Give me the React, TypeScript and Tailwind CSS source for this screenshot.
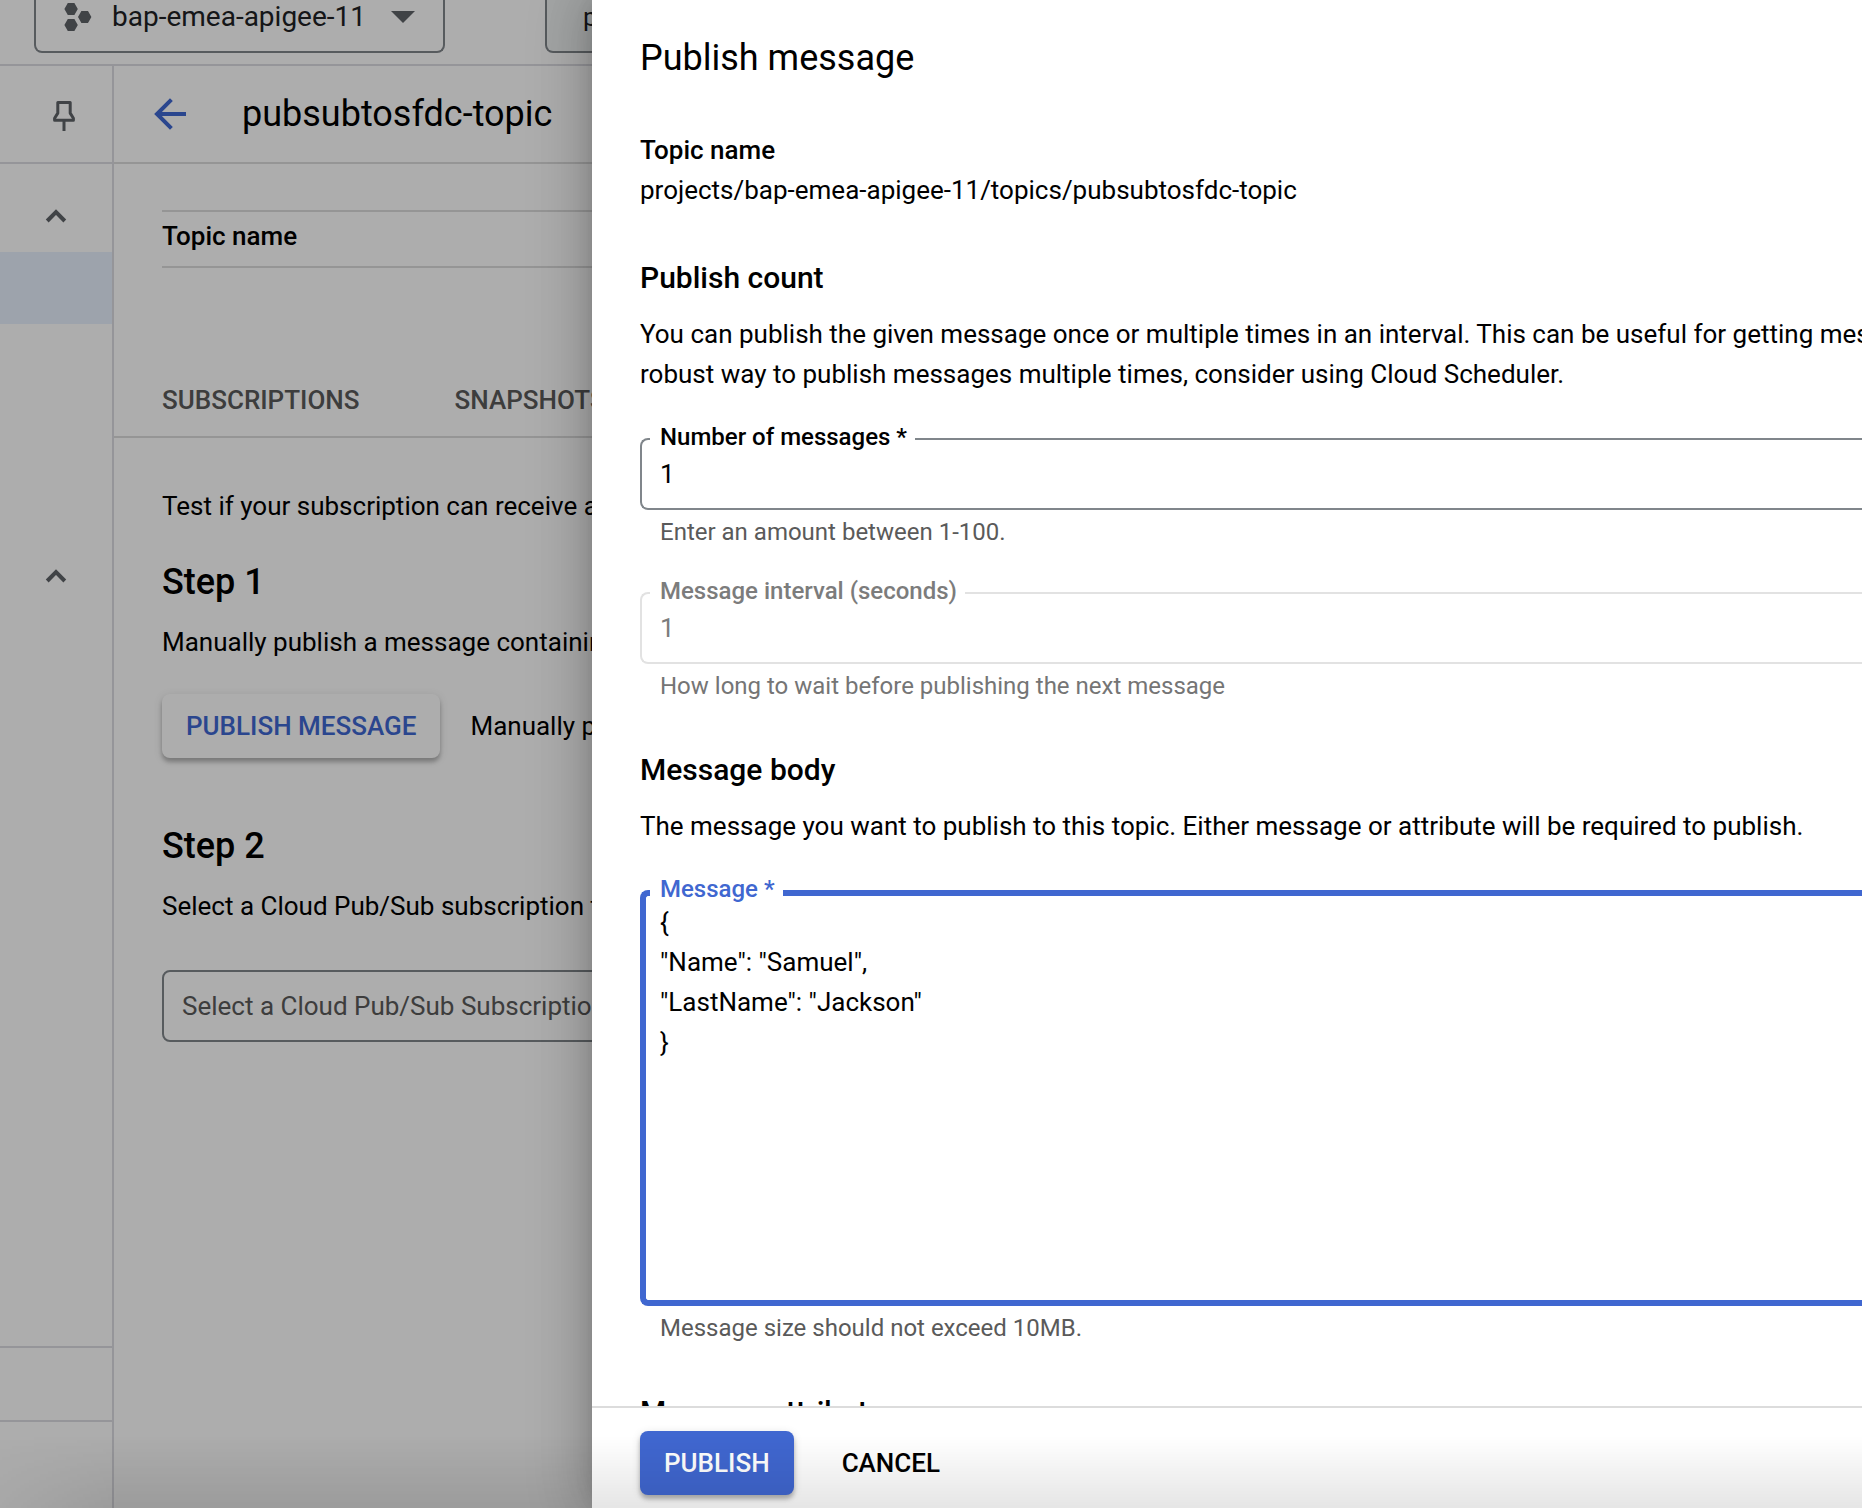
import React from "react";

function Chevron() {
  return (
    <svg width="22" height="14" viewBox="0 0 22 14" fill="none" stroke="#5f6368" strokeWidth="4" aria-hidden="true">
      <path d="M2.2 12 11 3.2l8.8 8.8" />
    </svg>
  );
}

function PinIcon() {
  return (
    <svg width="24" height="32" viewBox="0 0 24 32" fill="none" stroke="#5f6368" strokeWidth="3" aria-hidden="true">
      <path d="M5.8 2.5h12.4v10.6l3.2 5.2v2H2.6v-2l3.2-5.2z" strokeLinejoin="round" />
      <path d="M12 20.5V31" />
    </svg>
  );
}

function BackIcon() {
  return (
    <svg width="32" height="32" viewBox="0 0 32 32" fill="none" stroke="#3f67d2" strokeWidth="4" aria-hidden="true">
      <path d="M17.4 1.6 3 16l14.4 14.4M3 16h29" />
    </svg>
  );
}

function ProjectIcon() {
  return (
    <svg width="28" height="30" viewBox="0 0 28 30" fill="#5f6368" aria-hidden="true">
      <path d="M3.8 1h6.6l3.4 6-3.4 6H3.8L.4 7zM3.8 17h6.6l3.4 6-3.4 6H3.8L.4 23zM17.4 9H24l3.4 6-3.4 6h-6.6L14 15z" />
    </svg>
  );
}

type FieldProps = {
  id: string;
  label: string;
  hint: string;
  labelClass: string;
  hintClass: string;
  children: React.ReactNode;
};

function Field({ id, label, hint, labelClass, hintClass, children }: FieldProps) {
  return (
    <div className="mt-11">
      <div className="relative">
        {children}
        <label
          htmlFor={id}
          className={`absolute left-2.5 -top-[17px] bg-white pl-2.5 pr-2 text-[24px] leading-8 font-medium ${labelClass}`}
        >
          {label}
        </label>
      </div>
      <p id={`${id}-hint`} className={`mt-1.5 pl-5 text-[24px] leading-8 ${hintClass}`}>
        {hint}
      </p>
    </div>
  );
}

const message = `{
"Name": "Samuel",
"LastName": "Jackson"
}`;

function Sidebar() {
  return (
    <nav className="flex w-[114px] shrink-0 flex-col border-r-2 border-[#dcdce2]">
      <div className="flex h-[98px] items-center justify-center border-b-2 border-[#dcdce2] pt-1 pl-4">
        <button type="button" aria-label="Pin menu">
          <PinIcon />
        </button>
      </div>
      <button type="button" aria-label="Collapse section" className="flex h-[88px] items-center justify-center pt-4">
        <Chevron />
      </button>
      <a href="#topics" aria-label="Topics" className="block h-[72px] bg-[#e8f0fe]" />
      <button type="button" aria-label="Collapse section" className="mt-52 flex h-[88px] items-center justify-center">
        <Chevron />
      </button>
      <div className="mt-auto h-[74px] border-t-2 border-[#dcdce2]" />
      <div className="h-[88px] border-t-2 border-[#dcdce2]" />
    </nav>
  );
}

function TopicPage() {
  return (
    <main className="min-w-0 flex-1">
      <div className="flex h-[98px] items-center gap-14 border-b-2 border-[#dcdcdc] pl-10">
        <a href="#back" aria-label="Back">
          <BackIcon />
        </a>
        <h1 className="text-[36px] leading-[48px]">pubsubtosfdc-topic</h1>
      </div>
      <div className="pt-[46px] pl-12">
        <table className="w-full">
          <thead>
            <tr className="border-y-2 border-[#dcdcdc]">
              <th scope="col" className="h-14 p-0 pb-1.5 text-left text-[26px] leading-10 font-medium">
                Topic name
              </th>
            </tr>
          </thead>
        </table>
      </div>
      <div className="mt-28 flex gap-[95px] border-b-2 border-[#dcdcdc] pb-4 pl-12 text-[26px] leading-10 font-medium text-[#5a5a5a]">
        <button type="button">SUBSCRIPTIONS</button>
        <button type="button">SNAPSHOTS</button>
      </div>
      <div className="pt-12 pl-12 text-[26px] leading-10 whitespace-nowrap">
        <p>Test if your subscription can receive a</p>
        <h2 className="mt-8 text-[36px] leading-[48px] font-medium">Step 1</h2>
        <p className="mt-4">Manually publish a message containing</p>
        <div className="mt-8 flex items-center gap-[30px]">
          <button
            type="button"
            className="h-16 rounded-lg bg-white px-6 font-medium text-[#3f67d2] shadow-[0_2px_10px_rgba(0,0,0,0.12),0_4px_4px_rgba(0,0,0,0.24)]"
          >
            PUBLISH MESSAGE
          </button>
          <p>Manually p</p>
        </div>
        <h2 className="mt-16 text-[36px] leading-[48px] font-medium">Step 2</h2>
        <p className="mt-4">Select a Cloud Pub/Sub subscription to</p>
        <select
          aria-label="Select a Cloud Pub/Sub Subscription"
          className="mt-11 block h-[72px] w-full appearance-none rounded-l-lg border-2 border-[#80868b] bg-transparent px-[18px] text-[#5a5a5a]"
        >
          <option>Select a Cloud Pub/Sub Subscription</option>
        </select>
      </div>
    </main>
  );
}

function PublishDrawer() {
  return (
    <aside
      role="dialog"
      aria-label="Publish message"
      className="absolute inset-y-0 right-0 left-[592px] flex flex-col bg-white shadow-[0_0_20px_-6px_rgba(0,0,0,0.2),0_0_48px_4px_rgba(0,0,0,0.14),0_0_60px_10px_rgba(0,0,0,0.12)]"
    >
      <div className="min-h-0 flex-1 overflow-hidden pt-[34px] pl-12 text-[26px] leading-10">
        <h2 className="text-[36px] leading-[48px]">Publish message</h2>
        <h3 className="mt-12 font-medium">Topic name</h3>
        <p>projects/bap-emea-apigee-11/topics/pubsubtosfdc-topic</p>

        <h3 className="mt-12 text-[30px] leading-10 font-medium">Publish count</h3>
        <p className="mt-4 whitespace-nowrap">
          You can publish the given message once or multiple times in an interval. This can be useful for getting messages
          <br />
          robust way to publish messages multiple times, consider using Cloud Scheduler.
        </p>
        <Field
          id="count"
          label="Number of messages *"
          hint="Enter an amount between 1-100."
          labelClass="text-black"
          hintClass="text-[#5a5a5a]"
        >
          <input
            id="count"
            type="text"
            inputMode="numeric"
            defaultValue="1"
            aria-describedby="count-hint"
            className="block h-[72px] w-full rounded-l-lg border-2 border-r-0 border-[#80868b] pl-[18px] outline-none"
          />
        </Field>
        <Field
          id="interval"
          label="Message interval (seconds)"
          hint="How long to wait before publishing the next message"
          labelClass="text-[#7c7c7c]"
          hintClass="text-[#757575]"
        >
          <input
            id="interval"
            type="text"
            inputMode="numeric"
            defaultValue="1"
            disabled
            aria-describedby="interval-hint"
            className="block h-[72px] w-full rounded-l-lg border-2 border-r-0 border-[#e2e2e2] pl-[18px] text-[#7c7c7c]"
          />
        </Field>

        <h3 className="mt-12 text-[30px] leading-10 font-medium">Message body</h3>
        <p className="mt-4 whitespace-nowrap">
          The message you want to publish to this topic. Either message or attribute will be required to publish.
        </p>
        <Field
          id="message"
          label="Message *"
          hint="Message size should not exceed 10MB."
          labelClass="text-[#4067d0]"
          hintClass="text-[#5a5a5a]"
        >
          <textarea
            id="message"
            defaultValue={message}
            aria-describedby="message-hint"
            className="block h-[416px] w-full resize-none rounded-l-lg border-6 border-r-0 border-[#4067d0] pt-1.5 pl-3.5 outline-none"
          />
        </Field>
        <h3 className="mt-12 text-[30px] leading-10 font-medium">Message attributes</h3>
      </div>
      <footer className="flex shrink-0 gap-6 border-t-2 border-[#dcdcdc] pt-[23px] pb-[13px] pl-12 text-[26px] leading-10 font-medium">
        <button
          type="button"
          className="h-16 rounded-lg bg-[#4067d0] px-6 text-white shadow-[0_2px_10px_rgba(0,0,0,0.12),0_4px_4px_rgba(0,0,0,0.24)]"
        >
          PUBLISH
        </button>
        <button type="button" className="h-16 px-6">
          CANCEL
        </button>
      </footer>
    </aside>
  );
}

export default function App() {
  return (
    <div className="relative flex h-screen flex-col overflow-hidden bg-white font-['Roboto',sans-serif] text-black">
      <header className="flex h-[66px] shrink-0 items-start gap-[100px] border-b-2 border-[#dcdce2] pl-[34px]">
        <button
          type="button"
          className="flex h-[53px] items-center rounded-b-lg border-2 border-t-0 border-[#80868b] pr-7 pb-[18px] pl-7 text-[28px] leading-8 text-[#202124]"
        >
          <ProjectIcon />
          <span className="mr-[25px] ml-5">bap-emea-apigee-11</span>
          <svg width="24" height="12" viewBox="0 0 24 12" fill="#5f6368" aria-hidden="true">
            <path d="M0 0h24L12 12z" />
          </svg>
        </button>
        <input
          type="text"
          aria-label="Search"
          defaultValue="pubsub"
          className="h-[53px] min-w-0 flex-1 rounded-b-lg border-2 border-t-0 border-[#80868b] bg-[#f1f3f4] pb-[18px] pl-9 text-[26px] text-[#202124]"
        />
      </header>
      <div className="flex min-h-0 flex-1">
        <Sidebar />
        <TopicPage />
      </div>
      <div className="absolute inset-0 bg-black/32" />
      <PublishDrawer />
      <div className="pointer-events-none absolute inset-x-0 bottom-0 h-[72px] bg-linear-to-b from-transparent to-black/10 [mask-image:linear-gradient(to_right,rgba(0,0,0,0.3),black_120px)]" />
    </div>
  );
}
